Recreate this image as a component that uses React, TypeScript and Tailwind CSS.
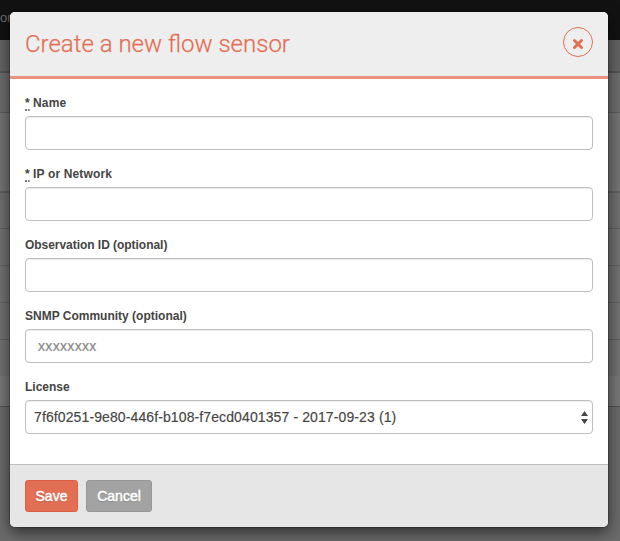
import React from "react";

const rowStyles = [
  "h-[31px] bg-[#646464]",
  "h-[41px] border-t-2 border-[#545454] bg-[#6d6d6d]",
  "h-[79px] border-t border-[#5c5c5c] bg-[#737373]",
  "h-[37px] border-t-2 border-[#5f5f5f] bg-[#6f6f6f]",
  "h-[37px] border-t border-[#5f5f5f] bg-[#717171]",
  "h-[37px] border-t border-[#5f5f5f] bg-[#717171]",
  "h-[37px] border-t border-[#5f5f5f] bg-[#717171]",
  "h-[37px] border-t border-[#5f5f5f] bg-[#717171]",
  "h-[30px] bg-[#777]",
  "grow border-t border-[#505050] bg-[#6b6b6b]",
];

function Backdrop() {
  return (
    <div className="flex h-full flex-col">
      <div className="h-10 shrink-0 bg-[#121212] pt-[9px] text-[13px] leading-[18px] text-[#6e6e6e]">or</div>
      {rowStyles.map((row, i) => (
        <div key={i} className={row} />
      ))}
    </div>
  );
}

const control =
  "block h-[34px] w-full rounded border border-[#bfbfbf] bg-white shadow-[inset_0_1px_1px_rgba(0,0,0,0.075)] outline-none";

interface FieldProps {
  label: string;
  labelClass: string;
  required?: boolean;
  children: React.ReactNode;
}

function Field({ label, labelClass, required, children }: FieldProps) {
  return (
    <div className="flex h-[71px] flex-col">
      <label className="flex h-[22px] items-start gap-[3px] text-[12px] font-bold leading-[18px] text-[#444]">
        {required && (
          <abbr className="h-[17px] w-[5px] border-b-2 border-dotted border-[#777] no-underline">*</abbr>
        )}
        <span className={labelClass}>{label}</span>
      </label>
      {children}
    </div>
  );
}

export default function App() {
  return (
    <div className="relative h-[541px] w-[620px] overflow-hidden font-['Liberation_Sans',Arial,sans-serif]">
      <Backdrop />
      <div className="absolute left-[10px] top-3 flex h-[515px] w-[598px] flex-col overflow-hidden rounded-[5px] bg-white shadow-[0_5px_15px_rgba(0,0,0,0.6),0_0_0_1px_rgba(0,0,0,0.2)]">
        <header className="flex h-[67px] items-center justify-between border-b-[3px] border-[#e9927e] bg-[#eee] px-[15px]">
          <h1 className="font-['Roboto',sans-serif] text-[24px] font-light leading-8 text-[#e26e54] [-webkit-text-stroke:0.25px_#e26e54]">
            Create a new flow sensor
          </h1>
          <button className="mb-1 flex size-[30px] items-center justify-center rounded-full border border-[#e26e54] pt-1" aria-label="Close">
            <svg width="12" height="12" viewBox="0 0 12 12" stroke="#e26e54" strokeWidth="3" strokeLinecap="round">
              <path d="M2.5 2.5 9.5 9.5M9.5 2.5 2.5 9.5" />
            </svg>
          </button>
        </header>
        <main className="h-[385px] px-[15px] pt-[15px]">
          <Field label="Name" labelClass="tracking-[0.2px]" required>
            <input className={control} />
          </Field>
          <Field label="IP or Network" labelClass="tracking-[0.15px]" required>
            <input className={control} />
          </Field>
          <Field label="Observation ID (optional)" labelClass="tracking-[-0.04px]">
            <input className={control} />
          </Field>
          <Field label="SNMP Community (optional)" labelClass="">
            <input
              className={`${control} px-3 text-[14px] tracking-[0.33px] [-webkit-text-stroke:0.2px_#888] placeholder:text-[#888]`}
              placeholder="xxxxxxxx"
            />
          </Field>
          <Field label="License" labelClass="">
            <div className={`${control} flex items-center justify-between pl-2 pr-1 text-[14px] text-[#444]`}>
              <span className="whitespace-nowrap tracking-[0.11px] [-webkit-text-stroke:0.15px_#444]">
                7f6f0251-9e80-446f-b108-f7ecd0401357 - 2017-09-23 (1)
              </span>
              <svg width="7" height="13" viewBox="0 0 7 13" fill="#444">
                <path d="M3.5 0 7 5H0zM0 8h7l-3.5 5z" />
              </svg>
            </div>
          </Field>
        </main>
        <footer className="flex grow items-start gap-2 border-t border-[#bfbfbf] bg-[#e6e6e6] px-[15px] pt-[15px] text-[14px] text-white">
          <button className="h-8 w-[53px] rounded-[3px] border border-[#dd5f43] bg-[#e26e54] [-webkit-text-stroke:0.5px_#fff] [text-shadow:0_1px_1px_rgba(0,0,0,0.25)]">
            Save
          </button>
          <button className="h-8 w-[66px] rounded-[3px] border border-[#969696] bg-[#a3a3a3] [-webkit-text-stroke:0.5px_#fff] [text-shadow:0_1px_1px_rgba(0,0,0,0.25)]">
            Cancel
          </button>
        </footer>
      </div>
    </div>
  );
}
